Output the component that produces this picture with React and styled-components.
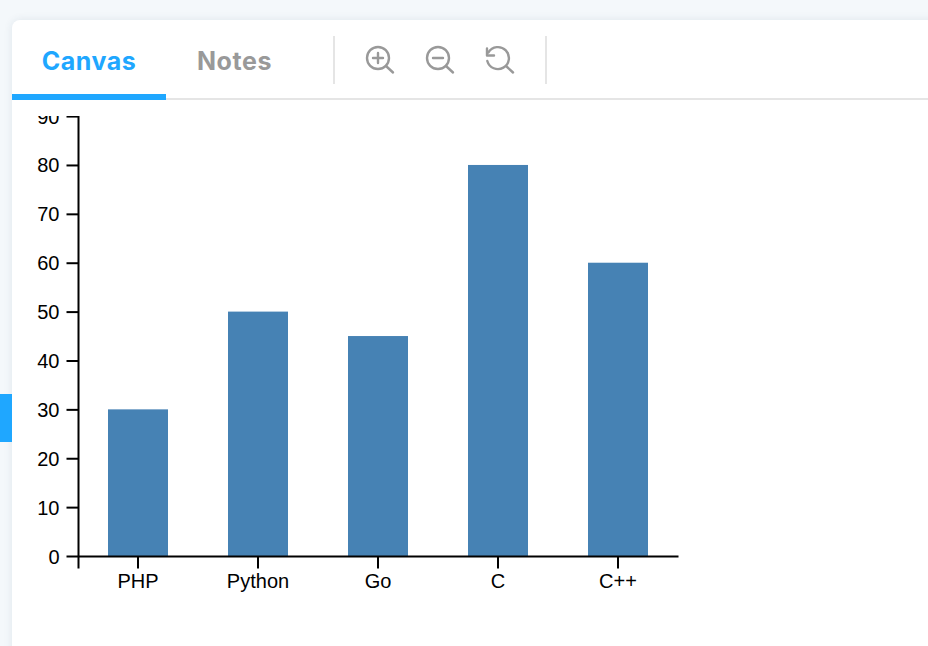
import React from "react";
import styled, { createGlobalStyle } from "styled-components";

const data = [
  { name: "PHP", value: 30 },
  { name: "Python", value: 50 },
  { name: "Go", value: 45 },
  { name: "C", value: 80 },
  { name: "C++", value: 60 },
];
const ticks = [0, 10, 20, 30, 40, 50, 60, 70, 80, 90];

const X0 = 66.5;
const Y0 = 440.5;
const UNIT = 4.888;

const GlobalStyle = createGlobalStyle`
  html, body {
    margin: 0;
    height: 100%;
    overflow: hidden;
    background: #f4f8fb;
  }
`;

const Page = styled.div`
  position: relative;
  width: 928px;
  height: 646px;
  padding: 20px 0 0 12px;
  box-sizing: border-box;
  overflow: hidden;
`;

const SideMark = styled.div`
  position: absolute;
  left: 0;
  top: 394px;
  width: 12px;
  height: 48px;
  background: #1fa7ff;
`;

const Card = styled.div`
  width: 940px;
  height: 640px;
  background: #fff;
  border-radius: 8px 0 0 0;
  box-shadow: 0 0 8px rgba(40, 70, 100, 0.1);
`;

const Toolbar = styled.div`
  display: flex;
  align-items: center;
  height: 80px;
  box-sizing: border-box;
  border-bottom: 2px solid #e5e5e5;
`;

const Tab = styled.div`
  box-sizing: border-box;
  width: ${(p) => p.$width}px;
  height: 80px;
  padding-top: 28px;
  margin-bottom: -2px;
  text-align: center;
  font: 700 25px/26px Inter, "Liberation Sans", sans-serif;
  letter-spacing: 0.55px;
  color: ${(p) => (p.$active ? "#1fa7ff" : "#999")};
  border-bottom: 6px solid ${(p) => (p.$active ? "#1fa7ff" : "transparent")};
`;

const Divider = styled.div`
  width: 2px;
  height: 48px;
  margin-top: 2px;
  margin-left: ${(p) => p.$gap || 0}px;
  background: #e5e5e5;
`;

const Tools = styled.div`
  display: flex;
  align-items: center;
  gap: 28px;
  padding: 0 29px;
  margin-top: 1px;
`;

const ToolIcon = styled.svg`
  display: block;
  width: 32px;
  height: 32px;
  fill: none;
  stroke: #999;
  stroke-width: 2.4;
  stroke-linecap: round;
  stroke-linejoin: round;
`;

const ChartWrap = styled.div`
  padding-top: 16px;
`;

const Chart = styled.svg`
  display: block;
  width: 700px;
  height: 500px;
  overflow: hidden;
  font-family: "Liberation Sans", Arial, sans-serif;
  font-size: 20px;
`;

const Bar = styled.rect`
  fill: #4682b4;
`;

const AxisLine = styled.path`
  fill: none;
  stroke: #000;
  stroke-width: 2;
`;

const ZoomIn = () => (
  <ToolIcon viewBox="0 0 32 32">
    <circle cx="14" cy="14" r="11" />
    <path d="M22 22l7 6.5M14 9v10M9 14h10" />
  </ToolIcon>
);

const ZoomOut = () => (
  <ToolIcon viewBox="0 0 32 32">
    <circle cx="14" cy="14" r="11" />
    <path d="M22 22l7 6.5M9 14h10" />
  </ToolIcon>
);

const Reset = () => (
  <ToolIcon viewBox="0 0 32 32">
    <path d="M4.5 8.4A11 11 0 1 1 3.3 17M22 22l7 6.5M3 4.5v7h7" />
  </ToolIcon>
);

export default function App() {
  return (
    <Page>
      <GlobalStyle />
      <SideMark />
      <Card>
        <Toolbar>
          <Tab $active $width={154}>Canvas</Tab>
          <Tab $width={137}>Notes</Tab>
          <Divider $gap={30} />
          <Tools>
            <ZoomIn />
            <ZoomOut />
            <Reset />
          </Tools>
          <Divider />
        </Toolbar>
        <ChartWrap>
          <Chart viewBox="0 0 700 500">
            {data.map((d, i) => (
              <Bar
                key={d.name}
                x={X0 + 29.5 + i * 120}
                y={Y0 - 0.5 - d.value * UNIT}
                width={60}
                height={d.value * UNIT}
              />
            ))}
            <AxisLine d={`M${X0} 0V${Y0 + 12}M${X0} ${Y0}H${X0 + 600}`} />
            {ticks.map((t) => (
              <g key={t}>
                <AxisLine d={`M${X0 - 12} ${Y0 - t * UNIT}H${X0}`} />
                <text x={X0 - 19} y={Y0 - t * UNIT + 7} textAnchor="end">{t}</text>
              </g>
            ))}
            {data.map((d, i) => (
              <g key={d.name}>
                <AxisLine d={`M${X0 + 59.5 + i * 120} ${Y0}v12`} />
                <text x={X0 + 59.5 + i * 120} y={Y0 + 31} textAnchor="middle">{d.name}</text>
              </g>
            ))}
          </Chart>
        </ChartWrap>
      </Card>
    </Page>
  );
}
